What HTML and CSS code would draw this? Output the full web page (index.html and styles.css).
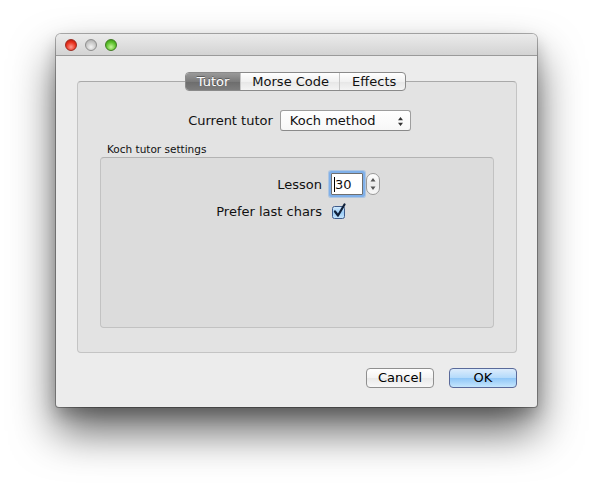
FILE: index.html
```html
<!DOCTYPE html>
<html>
<head>
<meta charset="utf-8">
<link rel="stylesheet" href="styles.css">
</head>
<body>
<div class="window">
  <div class="titlebar">
    <span class="light red"></span>
    <span class="light gray"></span>
    <span class="light green"></span>
  </div>
  <div class="content">
    <div class="tabwidget">
      <div class="tabs">
        <span class="tab selected">Tutor</span>
        <span class="tab">Morse Code</span>
        <span class="tab last">Effects</span>
      </div>
      <div class="pane">
        <div class="tutor-row">
          <span class="label">Current tutor</span>
          <div class="combo">
            <span>Koch method</span>
            <svg class="updown" width="7" height="11" viewBox="0 0 7 11"><path d="M3.5 1 L6 4.2 H1 Z M3.5 10 L6 6.8 H1 Z" fill="#333"/></svg>
          </div>
        </div>
        <div class="group-title">Koch tutor settings</div>
        <div class="group">
          <div class="form">
            <span class="flabel">Lesson</span>
            <div class="spin">
              <div class="spinfield"><span class="caret"></span>30</div>
              <div class="stepper">
                <svg width="14" height="22" viewBox="0 0 14 22"><path d="M7 5 L9.5 8.5 H4.5 Z M7 17 L9.5 13.5 H4.5 Z" fill="#555"/></svg>
              </div>
            </div>
            <span class="flabel">Prefer last chars</span>
            <div class="check">
              <svg width="16" height="16" viewBox="0 0 16 16">
                <defs>
                  <linearGradient id="cb" x1="0" y1="0" x2="0" y2="1">
                    <stop offset="0" stop-color="#d6ecfd"/>
                    <stop offset="0.5" stop-color="#9ccdf6"/>
                    <stop offset="1" stop-color="#c3e3fc"/>
                  </linearGradient>
                </defs>
                <rect x="1.5" y="3.5" width="12" height="12" rx="2" fill="url(#cb)" stroke="#3e5a8a"/>
                <path d="M4 8.5 L7 12.5 L13.5 1.5" fill="none" stroke="#10203a" stroke-width="2.2" stroke-linecap="round" stroke-linejoin="round"/>
              </svg>
            </div>
          </div>
        </div>
      </div>
    </div>
    <div class="buttons">
      <button class="btn">Cancel</button>
      <button class="btn default">OK</button>
    </div>
  </div>
</div>
</body>
</html>
```

FILE: styles.css
```css
html, body {
  margin: 0;
  padding: 0;
  background: #ffffff;
}
body {
  padding: 34px 0 0 56px;
  min-height: 486px;
  box-sizing: border-box;
  font-family: "DejaVu Sans", "Liberation Sans", sans-serif;
  font-size: 12px;
  color: #111;
}
.window {
  width: 481px;
  height: 373px;
  background: #ececec;
  border-radius: 5px 5px 3px 3px;
  box-shadow: 0 0 0 1px rgba(0,0,0,0.3), 0 24px 44px rgba(0,0,0,0.62), 0 8px 16px rgba(0,0,0,0.2);
  display: flex;
  flex-direction: column;
  overflow: hidden;
}
.titlebar {
  height: 22px;
  flex: none;
  background: linear-gradient(#ebebeb, #d3d3d3);
  border-bottom: 1px solid #9a9a9a;
  box-sizing: border-box;
  display: flex;
  align-items: center;
  padding-left: 9px;
  gap: 8px;
}
.light {
  width: 12px;
  height: 12px;
  border-radius: 50%;
  box-sizing: border-box;
}
.red { background: radial-gradient(circle at 50% 70%, #ff9a8f 0, #e8321f 55%, #b01000 100%); border: 1px solid #9c2a20; }
.gray { background: radial-gradient(circle at 50% 70%, #f4f4f4 0, #c8c8c8 55%, #a4a4a4 100%); border: 1px solid #8e8e8e; }
.green { background: radial-gradient(circle at 50% 70%, #c6f59a 0, #5cc12c 55%, #2f8a0b 100%); border: 1px solid #3f7b21; }
.content {
  flex: 1;
  display: flex;
  flex-direction: column;
  padding: 16px 20px 20px 21px;
}
.tabwidget {
  display: flex;
  flex-direction: column;
  align-items: center;
}
.tabs {
  display: flex;
  height: 19px;
  box-sizing: border-box;
  border: 1px solid #8a8a8a;
  border-radius: 4px;
  background: linear-gradient(#ffffff, #f1f1f1 50%, #e6e6e6 51%, #f4f4f4);
  position: relative;
  z-index: 1;
  margin-right: 3px;
}
.tab {
  display: flex;
  align-items: center;
  padding: 0 10px 0 11px;
  font-size: 13px;
  border-left: 1px solid #c6c6c6;
}
.tab:first-child { border-left: none; }
.tab.last { padding: 0 9px 0 12px; }
.tab.selected {
  background: linear-gradient(#9a9a9a, #7b7b7b 50%, #6c6c6c 51%, #7d7d7d);
  color: #fff;
  text-shadow: 0 -1px 0 rgba(0,0,0,0.35);
  border-radius: 3px 0 0 3px;
  padding: 0 11px;
}
.pane {
  align-self: stretch;
  margin-top: -10px;
  height: 272px;
  box-sizing: border-box;
  border: 1px solid #c4c4c4;
  border-top-color: #a9a9a9;
  border-radius: 4px;
  background: #e3e3e3;
  padding: 28px 22px 0 22px;
  display: flex;
  flex-direction: column;
}
.tutor-row {
  display: flex;
  align-items: center;
  justify-content: center;
  gap: 7px;
  height: 21px;
  padding-left: 5px;
}
.label { font-size: 13px; }
.combo {
  width: 131px;
  height: 21px;
  box-sizing: border-box;
  border: 1px solid #9e9e9e;
  border-bottom-color: #8a8a8a;
  border-radius: 3px;
  background: linear-gradient(#ffffff, #f7f7f7);
  display: flex;
  align-items: center;
  justify-content: space-between;
  padding: 0 6px 0 9px;
  font-size: 13px;
}
.updown { margin-top: 1px; }
.group-title {
  font-size: 10.5px;
  margin: 12px 0 1px 7px;
  height: 13px;
  line-height: 13px;
}
.group {
  height: 171px;
  box-sizing: border-box;
  border: 1px solid #c2c2c2;
  border-top-color: #b3b3b3;
  border-radius: 4px;
  background: #dcdcdc;
  padding-top: 15px;
}
.form {
  display: grid;
  grid-template-columns: 221px auto;
  column-gap: 9px;
  row-gap: 8px;
  align-items: center;
}
.flabel {
  text-align: right;
  font-size: 13px;
}
.spin {
  display: flex;
  align-items: center;
  gap: 3px;
}
.spinfield {
  width: 32px;
  height: 22px;
  box-sizing: border-box;
  border: 1px solid #6f6f6f;
  background: #fff;
  box-shadow: 0 0 0 2px #7fb0ea, 0 0 0 3px rgba(120,170,230,0.45);
  border-radius: 1px;
  display: flex;
  align-items: center;
  padding-left: 2px;
  font-size: 13px;
}
.caret {
  width: 1px;
  height: 15px;
  background: #000;
}
.stepper {
  width: 14px;
  height: 22px;
  box-sizing: border-box;
  border: 1px solid #9a9a9a;
  border-radius: 7px;
  background: linear-gradient(#ffffff, #ececec 50%, #f8f8f8);
  display: flex;
}
.stepper svg { margin: -1px; }
.check {
  height: 16px;
  display: flex;
  align-items: center;
}
.buttons {
  display: flex;
  justify-content: flex-end;
  gap: 15px;
  margin-top: 15px;
}
.btn {
  height: 20px;
  width: 68px;
  box-sizing: border-box;
  font-family: "DejaVu Sans", "Liberation Sans", sans-serif;
  font-size: 13px;
  color: #000;
  border: 1px solid #8f8f8f;
  border-radius: 4px;
  background: linear-gradient(#ffffff, #f3f3f3 50%, #e9e9e9 51%, #f8f8f8);
  padding: 0;
  line-height: 18px;
}
.btn.default {
  border-color: #5a6a9a;
  background: linear-gradient(#dcecfc, #b3dafb 50%, #8fc6f7 51%, #c5e6fd);
}
```
